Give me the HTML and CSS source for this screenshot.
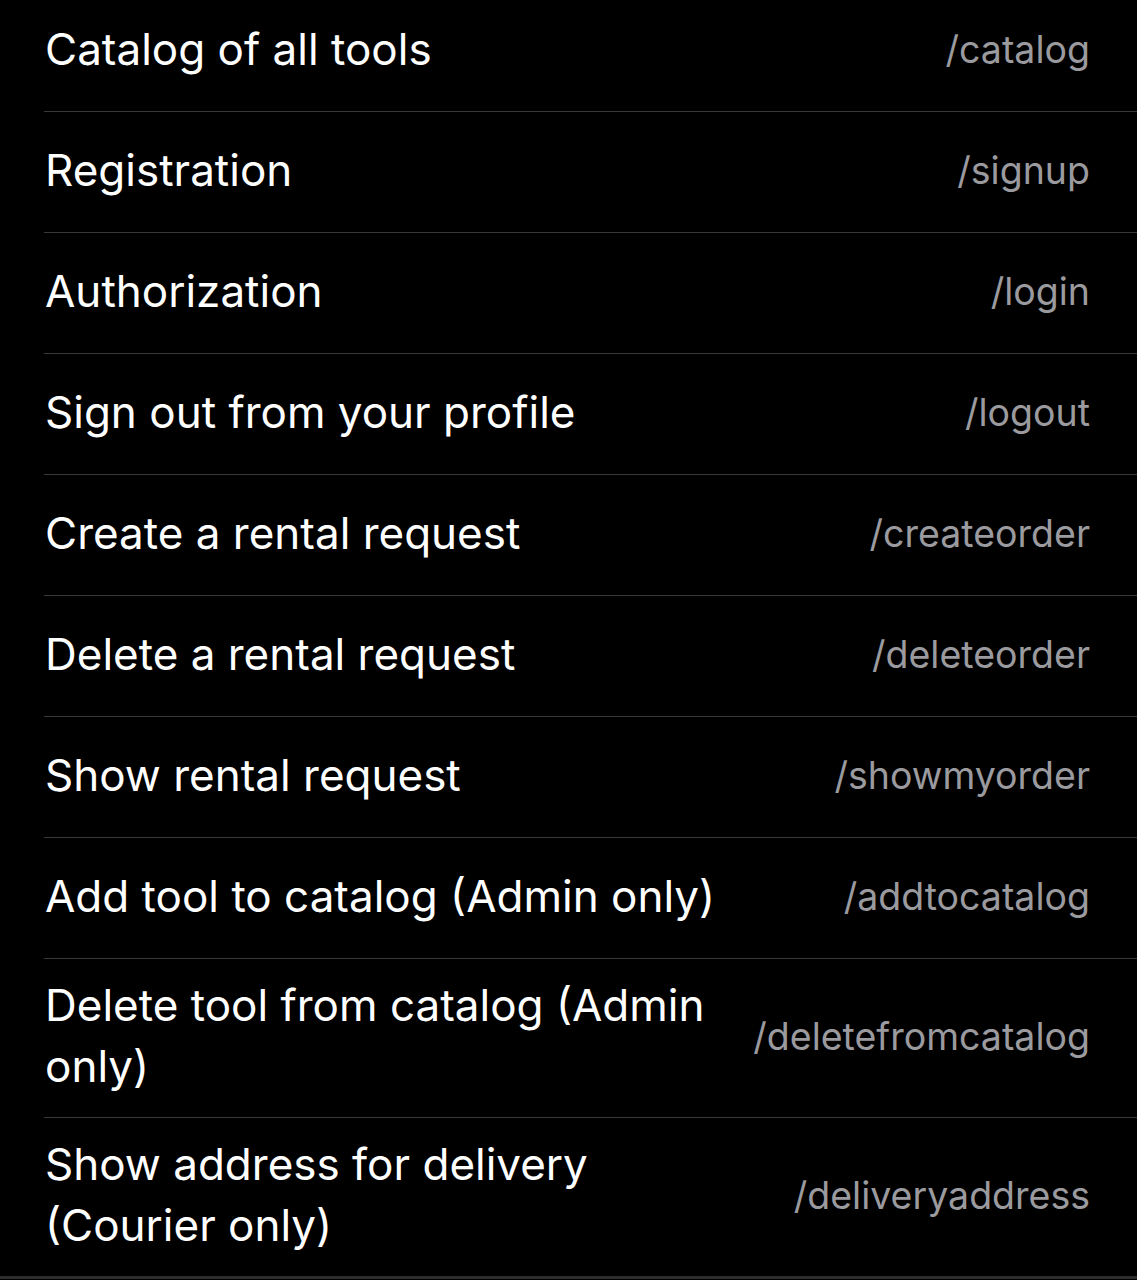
FILE: index.html
```html
<!DOCTYPE html>
<html lang="en">
<head>
<meta charset="utf-8">
<title>Commands</title>
<link rel="stylesheet" href="styles.css">
</head>
<body>
<main class="screen">
  <ul class="list">
    <li class="row"><span class="title">Catalog of all tools</span><span class="cmd">/catalog</span></li>
    <li class="row"><span class="title">Registration</span><span class="cmd">/signup</span></li>
    <li class="row"><span class="title">Authorization</span><span class="cmd">/login</span></li>
    <li class="row"><span class="title">Sign out from your profile</span><span class="cmd">/logout</span></li>
    <li class="row"><span class="title">Create a rental request</span><span class="cmd">/createorder</span></li>
    <li class="row"><span class="title">Delete a rental request</span><span class="cmd">/deleteorder</span></li>
    <li class="row"><span class="title">Show rental request</span><span class="cmd">/showmyorder</span></li>
    <li class="row"><span class="title">Add tool to catalog (Admin only)</span><span class="cmd">/addtocatalog</span></li>
    <li class="row"><span class="title">Delete tool from catalog (Admin only)</span><span class="cmd">/deletefromcatalog</span></li>
    <li class="row"><span class="title">Show address for delivery (Courier only)</span><span class="cmd">/deliveryaddress</span></li>
  </ul>
  <div class="band"></div>
</main>
</body>
</html>
```

FILE: styles.css
```css
html, body {
  margin: 0;
  padding: 0;
  background: #000;
}
body {
  font-family: Inter, "Noto Sans", "Liberation Sans", sans-serif;
  -webkit-font-smoothing: antialiased;
}
.screen {
  height: 1280px;
  overflow: hidden;
  display: flex;
  flex-direction: column;
}
.list {
  list-style: none;
  margin: -9px 0 0 44px;
  padding: 0;
}
.row {
  display: flex;
  align-items: center;
  justify-content: space-between;
  gap: 34px;
  min-height: 84px;
  padding: 16px 47px 20px 1px;
  border-bottom: 1px solid #38383a;
  font-size: 44px;
  line-height: 61px;
}
.row:last-child {
  border-bottom: none;
  padding-bottom: 20px;
}
.title {
  color: #fff;
  flex: 1 1 auto;
}
.cmd {
  color: #9a9a9f;
  flex: none;
  white-space: nowrap;
  font-size: 37.5px;
}
.band {
  height: 3px;
  background: #2c2c2e;
}
```
